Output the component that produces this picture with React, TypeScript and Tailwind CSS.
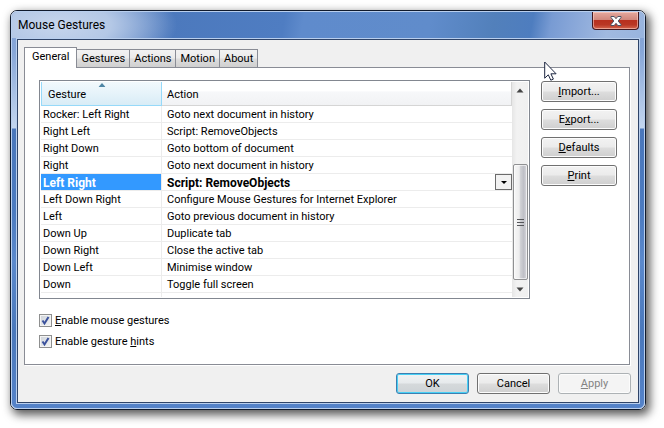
import { useState } from 'react';
import type { ReactNode } from 'react';

interface GestureRow {
  gesture: string;
  action: string;
}

const TABS = ['General', 'Gestures', 'Actions', 'Motion', 'About'];

const ROWS: GestureRow[] = [
  { gesture: 'Rocker: Left Right', action: 'Goto next document in history' },
  { gesture: 'Right Left', action: 'Script: RemoveObjects' },
  { gesture: 'Right Down', action: 'Goto bottom of document' },
  { gesture: 'Right', action: 'Goto next document in history' },
  { gesture: 'Left Right', action: 'Script: RemoveObjects' },
  { gesture: 'Left Down Right', action: 'Configure Mouse Gestures for Internet Explorer' },
  { gesture: 'Left', action: 'Goto previous document in history' },
  { gesture: 'Down Up', action: 'Duplicate tab' },
  { gesture: 'Down Right', action: 'Close the active tab' },
  { gesture: 'Down Left', action: 'Minimise window' },
  { gesture: 'Down', action: 'Toggle full screen' },
];

const SELECTED = 4;

// ── Title bar ──
function TitleBar() {
  return (
    <div className="flex h-[26px] items-start justify-between rounded-t-[5px] bg-[radial-gradient(ellipse_120px_50px_at_45px_13px,#c6d5ec_0%,#b4c8e6_45%,transparent_100%),linear-gradient(100deg,#8fabd8_0%,#6c90cb_14%,#4c79bd_25%,#4f7dc2_43%,#5f8bcc_46%,#608ccb_66%,#5280bb_76%,#4e7dbf_82%,#789bd3_85%,#86a5d8_88%,#a0b9e0_94%,#98b4de_100%)]">
      <h1 className="pl-1.5 text-xs leading-[26px] text-black">Mouse Gestures</h1>
      <button
        type="button"
        aria-label="Close"
        className="mr-[5px] flex h-[18px] w-[47px] items-center justify-center rounded-b-[4px] border border-t-0 border-[#421820] bg-[linear-gradient(#e5a99f_0%,#d1877c_45%,#b8301f_50%,#b93725_75%,#d4674f_100%)] shadow-[inset_0_0_0_1px_rgba(255,215,205,0.55)]"
      >
        <svg width="12" height="10" viewBox="0 0 12 10">
          <path
            d="M1 .5h3.2L6 2.7 7.8.5H11v1L8.2 5 11 8.5v1H7.8L6 7.3 4.2 9.5H1v-1L3.8 5 1 1.5z"
            fill="#fff"
            stroke="#4c5364"
            strokeWidth="1"
          />
        </svg>
      </button>
    </div>
  );
}

// ── Push button, aero look ──
interface PushButtonProps {
  children: ReactNode;
  className?: string;
  disabled?: boolean;
  primary?: boolean;
}

function PushButton({ children, className = '', disabled, primary }: PushButtonProps) {
  const look = disabled
    ? 'border-[#adb2b5] bg-[#f4f4f4] text-[#838383] shadow-[inset_0_0_0_1px_#fcfcfc]'
    : primary
      ? 'border-[#3c7fb1] bg-[linear-gradient(#f0f2f3_0%,#e6eaec_48%,#d5d9db_52%,#cdd3d6_100%)] shadow-[inset_0_0_0_1px_#48d0f5]'
      : 'border-[#707070] bg-[linear-gradient(#f2f2f2_0%,#ebebeb_48%,#dddddd_52%,#cfcfcf_100%)] shadow-[inset_0_0_0_1px_#fcfcfc]';
  return (
    <button
      type="button"
      disabled={disabled}
      className={`flex h-[21px] items-center justify-center rounded-[3px] border pt-0.5 ${look} ${className}`}
    >
      <span>{children}</span>
    </button>
  );
}

// ── Scroll bar beside the list ──
function ScrollBar() {
  return (
    <div className="flex w-4 flex-col items-center bg-[linear-gradient(90deg,#e6e6e6,#f2f2f2_30%,#f0f0f0)]">
      <svg width="8" height="17" viewBox="0 0 8 17" className="shrink-0">
        <path d="M4 6.5 7.5 10.5h-7z" fill="#444" />
      </svg>
      <div className="h-[65px] shrink-0" />
      <div className="flex w-[15px] flex-1 flex-col items-center justify-center gap-0.5 rounded-[2px] border border-[#8f9092] bg-[linear-gradient(90deg,#f7f7f7_0%,#ededee_40%,#d0d1d5_50%,#bebfc6_75%,#dcdce0_100%)] shadow-[inset_0_0_0_1px_rgba(255,255,255,0.6)]">
        <div className="h-px w-[7px] bg-[#55565a]" />
        <div className="h-px w-[7px] bg-[#55565a]" />
        <div className="h-px w-[7px] bg-[#55565a]" />
      </div>
      <svg width="8" height="17" viewBox="0 0 8 17" className="shrink-0">
        <path d="M.5 7.5h7L4 11.5z" fill="#444" />
      </svg>
    </div>
  );
}

// ── Gesture / action list ──
function GestureList() {
  return (
    <div className="flex min-w-0 flex-1 border border-[#828790] bg-white p-px text-[11px] leading-4">
      <div className="flex min-w-0 flex-1 flex-col">
        <table className="w-full table-fixed border-separate border-spacing-0 text-left">
          <colgroup>
            <col className="w-[121px]" />
            <col />
          </colgroup>
          <thead>
            <tr className="h-6">
              <th className="relative border-x border-b border-[#96d9f9] bg-[linear-gradient(#f2f9fc,#e6f3fa_50%,#d8ecf6)] p-0 pt-0.5 pl-1.5 font-normal">
                Gesture
                <svg
                  width="7"
                  height="4"
                  viewBox="0 0 7 4"
                  className="absolute top-px left-1/2 -translate-x-1/2"
                >
                  <path d="M3.5 0 7 4H0z" fill="#4f86a5" />
                </svg>
              </th>
              <th className="border-r border-b border-[#d5d5d5] bg-[linear-gradient(#fff_0%,#fff_40%,#f7f8fa_42%,#f1f2f4_100%)] p-0 pt-0.5 pl-[5px] font-normal">
                Action
              </th>
            </tr>
          </thead>
          <tbody>
            {ROWS.map((row, i) =>
              i === SELECTED ? (
                <tr key={row.gesture} className="h-[17px] text-xs leading-4 font-bold">
                  <td className="border-r border-b border-[#ececec] bg-[#3399ff] p-0 pt-0.5 pl-0.5 leading-[14px] text-white">
                    {row.gesture}
                  </td>
                  <td className="border-b border-[#ececec] p-0">
                    <div className="relative h-4">
                      <select
                        aria-label="Action"
                        defaultValue={row.action}
                        className="block h-4 w-full appearance-none bg-white pt-0.5 pl-[5px] leading-[14px] font-bold"
                      >
                        <option>{row.action}</option>
                      </select>
                      <div className="pointer-events-none absolute inset-y-0 right-0 flex w-[17px] items-center justify-center border border-[#6b6b6b] bg-[#f2f2f2]">
                        <svg width="6" height="3" viewBox="0 0 6 3">
                          <path d="M0 0h6L3 3z" fill="#000" />
                        </svg>
                      </div>
                    </div>
                  </td>
                </tr>
              ) : (
                <tr key={row.gesture} className="h-[17px] leading-[14px]">
                  <td className="border-r border-b border-[#ececec] p-0 pt-0.5 pl-0.5">
                    {row.gesture}
                  </td>
                  <td className="truncate border-b border-[#ececec] p-0 pt-0.5 pl-[5px]">
                    {row.action}
                  </td>
                </tr>
              ),
            )}
          </tbody>
        </table>
        <div className="h-1 w-[121px] border-r border-[#ececec]" />
      </div>
      <ScrollBar />
    </div>
  );
}

// ── Tick box with label ──
function CheckOption({ children }: { children: ReactNode }) {
  const [checked, setChecked] = useState(true);
  return (
    <label className="relative flex h-[13px] w-fit items-center gap-[3px] leading-[13px]">
      <input
        type="checkbox"
        checked={checked}
        onChange={(e) => setChecked(e.target.checked)}
        className="size-[13px] appearance-none border border-[#8e8f8f] bg-[linear-gradient(135deg,#cdd2d8,#f4f5f6)] shadow-[inset_0_0_0_1px_#f4f4f4]"
      />
      {checked && (
        <svg width="13" height="13" viewBox="0 0 13 13" className="pointer-events-none absolute left-0">
          <path d="M3.5 6.5 5.5 9.5 9.5 3" fill="none" stroke="#3b519c" strokeWidth="2" />
        </svg>
      )}
      <span>{children}</span>
    </label>
  );
}

function Pointer() {
  return (
    <svg
      width="13"
      height="20"
      viewBox="0 0 13 20"
      className="pointer-events-none absolute top-[50px] right-[88px]"
    >
      <path
        d="M.7 1v16.2l3.6-3.4 2.5 5.4 2.6-1.1-2.5-5.3h5.2z"
        fill="#fff"
        stroke="#1c2540"
        strokeWidth="1"
      />
    </svg>
  );
}

export default function App() {
  const [tab, setTab] = useState('General');

  return (
    <div className="bg-white pt-2.5 pr-[18px] pb-[18px] pl-2.5 font-['Roboto',sans-serif] text-[11px] text-black">
      <div className="relative rounded-[7px] border border-[#101a2c] shadow-[3px_4px_10px_1px_rgba(0,0,0,0.65)]">
        <div className="rounded-[6px] border border-[#b9cfee] bg-[linear-gradient(#7f9fd3_0px,#88a7d8_40px,#c3d6ef_116px,#4a77bb_117px,#4c7bc0_200px,#5b89cc_250px,#4a78bb_320px,#5583c9_100%)] pb-1">
          <TitleBar />
          <div className="mx-1 border border-[#b9cfee]">
            <div className="border border-[#2f4468] bg-[#f0f0f0] pt-[7px] pr-[7px] pb-2 pl-1.5">
              {/* ── Tabs ── */}
              <div role="tablist" className="flex h-5 items-end">
                {TABS.map((name) => (
                  <button
                    key={name}
                    type="button"
                    role="tab"
                    aria-selected={name === tab}
                    onClick={() => setTab(name)}
                    className={
                      name === tab
                        ? 'relative -mb-px h-[21px] border border-b-0 border-[#898c95] bg-white px-[7px] pb-px'
                        : 'h-[18px] border border-b-0 border-l-0 border-[#898c95] bg-[linear-gradient(#f2f2f2_0%,#ebebeb_48%,#dddddd_52%,#d0d0d0_100%)] px-1 pt-px'
                    }
                  >
                    {name}
                  </button>
                ))}
              </div>

              {/* ── General page ── */}
              <div className="mr-px border border-[#898c95] bg-white pt-3 pr-3 pb-4 pl-3.5 shadow-[1px_1px_0_#fff]">
                <div className="flex items-start gap-[11px]">
                  <GestureList />
                  <div className="flex w-[76px] flex-col gap-[7px] pt-px">
                    <PushButton>
                      <u>I</u>mport...
                    </PushButton>
                    <PushButton>
                      E<u>x</u>port...
                    </PushButton>
                    <PushButton>
                      <u>D</u>efaults
                    </PushButton>
                    <PushButton>
                      <u>P</u>rint
                    </PushButton>
                  </div>
                </div>
                <div className="mt-[15px] flex flex-col gap-2">
                  <CheckOption>
                    <u>E</u>nable mouse gestures
                  </CheckOption>
                  <CheckOption>
                    Enable gesture <u>h</u>ints
                  </CheckOption>
                </div>
              </div>

              <div className="mt-2 flex justify-end gap-2">
                <PushButton primary className="w-[73px]">
                  OK
                </PushButton>
                <PushButton className="w-[73px]">Cancel</PushButton>
                <PushButton disabled className="w-[73px]">
                  <u>A</u>pply
                </PushButton>
              </div>
            </div>
          </div>
        </div>
        <Pointer />
      </div>
    </div>
  );
}
